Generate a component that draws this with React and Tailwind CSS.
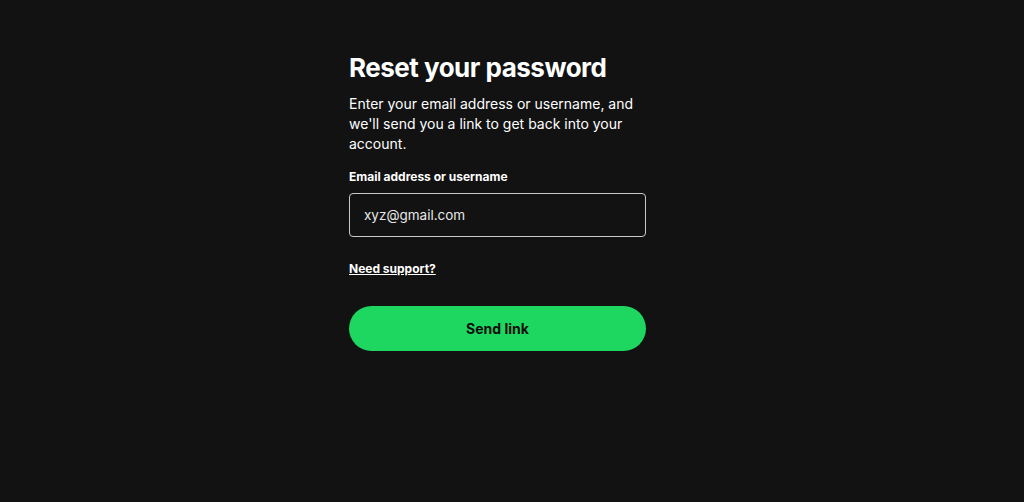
export default function App() {
  return (
    <div className="min-h-[502px] w-full bg-[#121212] flex justify-center pr-[29px]" style={{ fontFamily: "Inter, 'Noto Sans', sans-serif" }}>
      <div className="w-[297px] pt-[50px]">
        <h1 className="text-[26px] leading-[36px] font-bold text-white tracking-[-0.5px]">Reset your password</h1>
        <p className="mt-[8px] text-[14px] leading-[20px] text-white">
          Enter your email address or username, and we'll send you a link to get back into your account.
        </p>
        <label className="block mt-[15px] text-[12px] leading-[16px] font-bold text-white">Email address or username</label>
        <div className="mt-[8px] h-[44px] rounded-[4px] border border-[#c9c9c9] flex items-center px-[14px]">
          <span className="text-[13.5px] text-[#e8e8e8]">xyz@gmail.com</span>
        </div>
        <a className="block mt-[24px] text-[12px] leading-[16px] font-bold text-white underline">Need support?</a>
        <button className="mt-[29px] w-full h-[45px] rounded-full bg-[#1ed760] text-[14px] font-bold text-[#0d0d0d]">Send link</button>
      </div>
    </div>
  );
}
